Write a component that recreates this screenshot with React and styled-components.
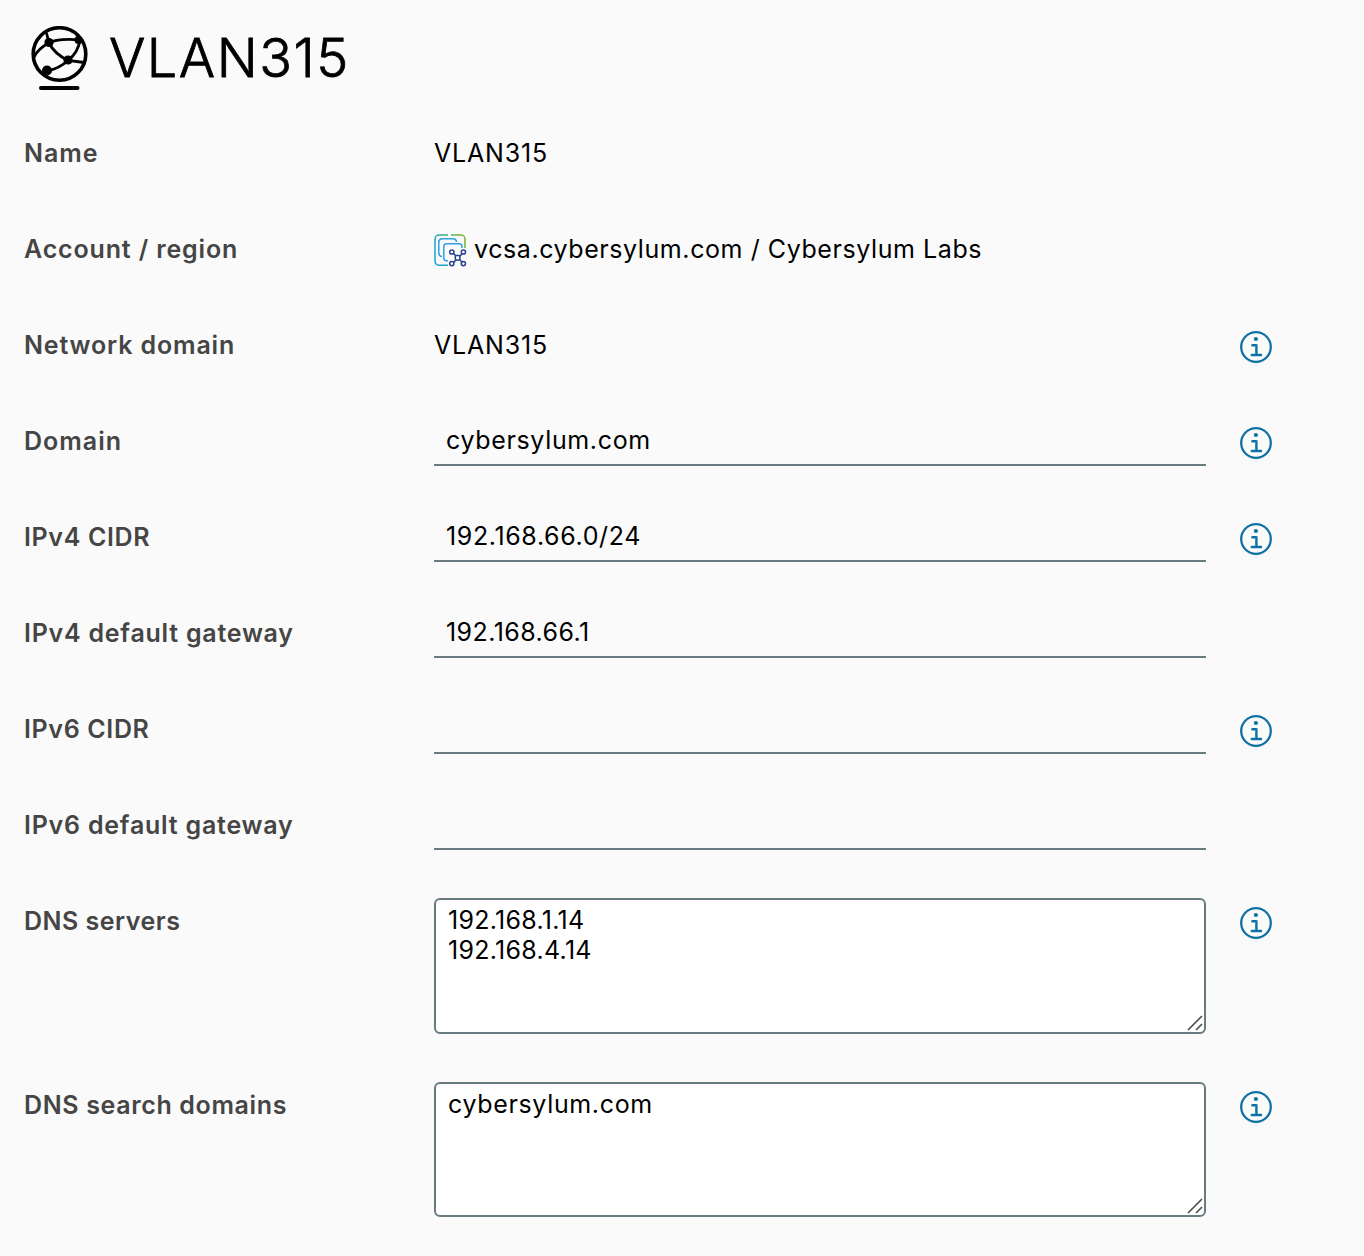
import React, { useState } from "react";
import styled, { createGlobalStyle } from "styled-components";

const GlobalStyle = createGlobalStyle`
  body {
    margin: 0;
    background: #fafafa;
    color: #000;
    font-family: Inter, "Liberation Sans", sans-serif;
    font-size: 25px;
  }
`;

// labelSpacing and spacing are letter spacings in px
const fields = [
  {
    label: "Name",
    labelSpacing: 1,
    type: "text",
    value: "VLAN315",
    spacing: 0.8,
  },
  {
    label: "Account / region",
    labelSpacing: 0.85,
    type: "account",
    value: "vcsa.cybersylum.com / Cybersylum Labs",
    spacing: 0.58,
  },
  {
    label: "Network domain",
    labelSpacing: 0.85,
    type: "text",
    value: "VLAN315",
    spacing: 0.8,
    info: true,
  },
  {
    label: "Domain",
    labelSpacing: 1,
    type: "input",
    value: "cybersylum.com",
    spacing: 0.65,
    info: true,
  },
  {
    label: "IPv4 CIDR",
    labelSpacing: 0.65,
    type: "input",
    value: "192.168.66.0/24",
    spacing: 0.62,
    info: true,
  },
  {
    label: "IPv4 default gateway",
    labelSpacing: 0.76,
    type: "input",
    value: "192.168.66.1",
    spacing: 0.42,
  },
  {
    label: "IPv6 CIDR",
    labelSpacing: 0.65,
    type: "input",
    value: "",
    info: true,
  },
  {
    label: "IPv6 default gateway",
    labelSpacing: 0.78,
    type: "input",
    value: "",
  },
  {
    label: "DNS servers",
    labelSpacing: 0.48,
    type: "area",
    value: "192.168.1.14\n192.168.4.14",
    spacing: 0.28,
    height: 136,
    info: true,
  },
  {
    label: "DNS search domains",
    labelSpacing: 0.64,
    type: "area",
    value: "cybersylum.com",
    spacing: 0.65,
    height: 135,
    info: true,
  },
];

const NetworkIcon = () => (
  <svg width="60" height="66" viewBox="0 0 60 66" fill="none" stroke="#000">
    <circle cx="29.5" cy="28" r="26.3" strokeWidth="3.6" />
    <g strokeWidth="2.8">
      <path d="M16.5 7 19 17C25 13.5 38 12.5 50 14" />
      <path d="M19 17C13 20 7 25 4 31" />
      <path d="M19 17C22 23 29 30 38 34.5L54 36.5" />
      <path d="M50 14C49 21 45 29 38 34.5C32 40 25 43.5 17 45" />
    </g>
    <g fill="#000" stroke="none">
      <circle cx="19" cy="16.5" r="4.6" />
      <circle cx="48.5" cy="14" r="4" />
      <circle cx="38" cy="34" r="4.6" />
      <circle cx="17" cy="44.5" r="5" />
    </g>
    <path d="M11 62H47.5" strokeWidth="4" strokeLinecap="round" />
  </svg>
);

const AccountIcon = () => (
  <svg width="34" height="34" viewBox="0 0 34 34" fill="none">
    <defs>
      <linearGradient
        id="frame"
        gradientUnits="userSpaceOnUse"
        x1="8"
        y1="16"
        x2="27"
        y2="4"
      >
        <stop offset="0" stopColor="#1ba5c4" />
        <stop offset="1" stopColor="#76b03a" />
      </linearGradient>
    </defs>
    <g stroke="url(#frame)" strokeWidth="1.5">
      <path d="M14 31.2H5A4 4 0 0 1 1 27V5A4 4 0 0 1 5 1H14" />
      <path d="M17 1H27A4 4 0 0 1 31 5V14" />
    </g>
    <g stroke="#2e9fe0" strokeWidth="1.5">
      <path d="M8 22.5A3.5 3.5 0 0 1 4.8 19V8A3.5 3.5 0 0 1 8 4.7H19A3.5 3.5 0 0 1 22.5 8" />
      <path d="M14 26.8H12.5A3 3 0 0 1 9.8 24V12.5A3 3 0 0 1 12.5 9.7H25A3 3 0 0 1 28 12.5V14" />
    </g>
    <g stroke="#27438d" strokeWidth="1.5">
      <path d="M19.5 19.5 28.5 28.5M28.5 19.5 19.5 28.5" />
      <rect x="21.3" y="21.5" width="4.6" height="4.6" rx="1" fill="#fafafa" />
      <circle cx="17.8" cy="18" r="2.1" />
      <circle cx="29.4" cy="18" r="2.1" />
      <circle cx="17.8" cy="29.6" r="2.1" />
      <circle cx="29.4" cy="29.6" r="2.1" />
    </g>
  </svg>
);

const InfoIcon = () => (
  <svg width="32" height="32" viewBox="0 0 32 32" fill="none" stroke="#0f72a3">
    <circle cx="16" cy="16" r="14.8" strokeWidth="2.3" />
    <circle cx="15.9" cy="8" r="2.1" fill="#0f72a3" stroke="none" />
    <path
      d="M12.4 14.2H16.4V24M11.8 24H21"
      strokeWidth="2.4"
      strokeLinecap="round"
      strokeLinejoin="round"
    />
  </svg>
);

const Field = ({ type, value, spacing, height }) => {
  const [current, setCurrent] = useState(value);
  const onChange = (e) => setCurrent(e.currentTarget.value);

  if (type === "input") {
    return <Input value={current} onChange={onChange} $spacing={spacing} />;
  }

  if (type === "area") {
    return (
      <AreaWrapper>
        <Area
          value={current}
          onChange={onChange}
          $spacing={spacing}
          $height={height}
        />
        <Grip width="16" height="16" viewBox="0 0 16 16">
          <path d="M1 15 15 1M9 15 15 9" stroke="#505050" strokeWidth="1.7" />
        </Grip>
      </AreaWrapper>
    );
  }

  return (
    <Value>
      {type === "account" && <AccountIcon />}
      <ValueText $isAccount={type === "account"} $spacing={spacing}>
        {value}
      </ValueText>
    </Value>
  );
};

export default function App() {
  return (
    <>
      <GlobalStyle />
      <Page>
        <Header>
          <NetworkIcon />
          <Title>VLAN315</Title>
        </Header>
        <Form>
          {fields.map((field) => (
            <Row key={field.label}>
              <Label $spacing={field.labelSpacing}>{field.label}</Label>
              <Field
                type={field.type}
                value={field.value}
                spacing={field.spacing}
                height={field.height}
              />
              {field.info && (
                <InfoButton aria-label={field.label}>
                  <InfoIcon />
                </InfoButton>
              )}
            </Row>
          ))}
        </Form>
      </Page>
    </>
  );
}

const Page = styled.div`
  box-sizing: border-box;
  width: 1364px;
  height: 1256px;
  padding: 0 24px;
  overflow: hidden;
`;

const Header = styled.div`
  display: flex;
  height: 104px;
  padding: 26px 0 0 6px;
  box-sizing: border-box;
  margin-bottom: 26px;
`;

const Title = styled.h1`
  margin: 0 0 0 19px;
  font-size: 54px;
  font-weight: 300;
  line-height: 63px;
  letter-spacing: 1.5px;
  -webkit-text-stroke: 0.8px #000;
`;

const Form = styled.div`
  display: flex;
  flex-direction: column;
  gap: 48px;
`;

const Row = styled.div`
  display: grid;
  grid-template-columns: 410px 772px 66px;
  align-items: start;
`;

const Label = styled.label`
  color: #454545;
  font-weight: 600;
  line-height: 46px;
  letter-spacing: ${(props) => props.$spacing}px;
`;

const Value = styled.div`
  display: flex;
  align-items: flex-start;
  height: 48px;

  svg {
    margin-top: 8px;
  }
`;

const ValueText = styled.span`
  margin-left: ${(props) => (props.$isAccount ? "6px" : "0")};
  white-space: nowrap;
  line-height: 46px;
  letter-spacing: ${(props) => props.$spacing}px;
`;

const Input = styled.input`
  box-sizing: border-box;
  width: 100%;
  height: 48px;
  padding: 0 12px 2px;
  border: none;
  border-bottom: 2px solid #6a7a81;
  outline: none;
  background: transparent;
  color: #000;
  font: inherit;
  letter-spacing: ${(props) => props.$spacing || 0}px;
`;

const AreaWrapper = styled.div`
  position: relative;
`;

const Area = styled.textarea`
  display: block;
  box-sizing: border-box;
  width: 100%;
  height: ${(props) => props.$height}px;
  padding: 5px 12px;
  border: 2px solid #6a7a81;
  border-radius: 6px;
  outline: none;
  resize: none;
  background: #fff;
  color: #000;
  font: inherit;
  line-height: 30px;
  letter-spacing: ${(props) => props.$spacing}px;
`;

const Grip = styled.svg`
  position: absolute;
  right: 3px;
  bottom: 3px;
  pointer-events: none;
`;

const InfoButton = styled.button`
  width: 32px;
  height: 32px;
  margin: 9px 0 0 34px;
  padding: 0;
  border: none;
  background: none;
  cursor: pointer;

  svg {
    display: block;
  }
`;
